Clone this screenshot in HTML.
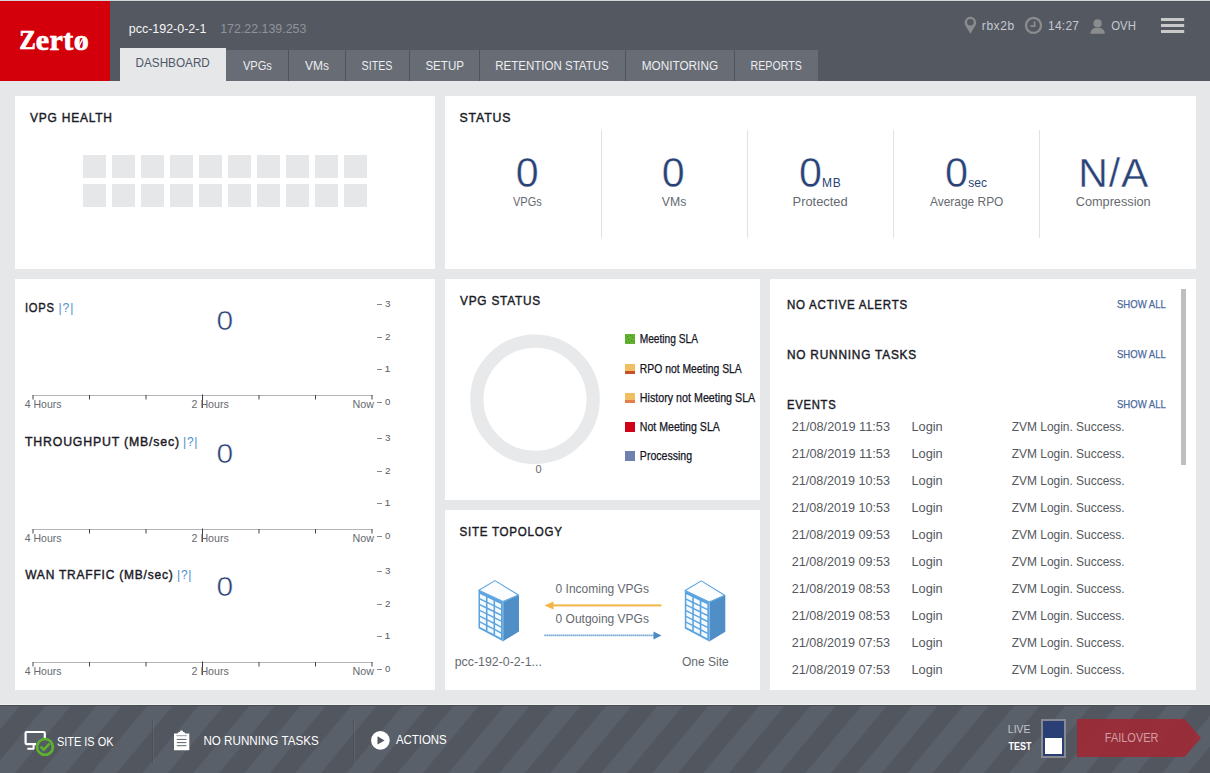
<!DOCTYPE html>
<html><head><meta charset="utf-8"><title>Zerto</title>
<style>
html,body{margin:0;padding:0;}
body{width:1210px;height:773px;overflow:hidden;background:#e6e7e8;font-family:"Liberation Sans",sans-serif;}
#root{position:relative;width:1210px;height:773px;overflow:hidden;background:#e6e7e8;}
.t{position:absolute;white-space:pre;line-height:1;transform-origin:0 50%;font-family:"Liberation Sans",sans-serif;}
.b{position:absolute;}
.panel{position:absolute;background:#fff;}
svg{position:absolute;overflow:visible;}

</style></head>
<body>
<div id="root">
<div class="b" style="left:0px;top:0px;width:1210px;height:81px;background:#545861;"></div>
<div class="b" style="left:0px;top:0px;width:1210px;height:1px;background:#d3d5d6;"></div>
<div class="b" style="left:0px;top:1px;width:1210px;height:1px;background:#4d5159;"></div>
<div class="b" style="left:0px;top:1px;width:110px;height:80px;background:#d3000c;"></div>
<div class="b" style="left:120px;top:48px;width:106px;height:33px;background:#e6e7e8;"></div>
<div class="b" style="left:226px;top:50px;width:592px;height:31px;background:#676c75;"></div>
<div class="b" style="left:288px;top:50px;width:1px;height:31px;background:#50545c;"></div>
<div class="b" style="left:345px;top:50px;width:1px;height:31px;background:#50545c;"></div>
<div class="b" style="left:409px;top:50px;width:1px;height:31px;background:#50545c;"></div>
<div class="b" style="left:479px;top:50px;width:1px;height:31px;background:#50545c;"></div>
<div class="b" style="left:625px;top:50px;width:1px;height:31px;background:#50545c;"></div>
<div class="b" style="left:734px;top:50px;width:1px;height:31px;background:#50545c;"></div>
<svg style="left:0;top:0" width="1210" height="81" viewBox="0 0 1210 81">
<g fill="#8b8c8e">
<path fill-rule="evenodd" d="M970.4 16.8c-3.2 0-5.7 2.5-5.7 5.6 0 1.5.5 2.6 1.2 3.8l4.5 7.6 4.5-7.6c.7-1.2 1.2-2.3 1.2-3.8 0-3.100-2.500-5.600-5.700-5.600zM970.400 18.900a3.300 3.300 0 1 1 0 6.600 3.300 3.300 0 0 1 0-6.600z"/>
<circle cx="1097.6" cy="23.4" r="4.1"/>
<path d="M1090.400 33.800c0-3.600 2.600-5.900 5-5.900h4.400c2.400 0 5 2.300 5 5.900z"/>
</g>
<circle cx="1033.500" cy="25.400" r="7.500" fill="none" stroke="#8b8c8e" stroke-width="2.300"/>
<path d="M1034.600 21.500v4.600h-4.200" fill="none" stroke="#8b8c8e" stroke-width="1.800"/>
<path d="M78.700 46.800L82.500 39.300" stroke="#fff" stroke-width="1.300" fill="none"/>
<g fill="#c9c9c9"><rect x="1161" y="18" width="23.200" height="3"/><rect x="1161" y="24" width="23.200" height="3"/><rect x="1161" y="30" width="23.200" height="3"/></g>
</svg>
<div class="panel" style="left:15px;top:96px;width:420px;height:173px"></div>
<div class="panel" style="left:445px;top:96px;width:751px;height:173px"></div>
<div class="panel" style="left:15px;top:279px;width:420px;height:411px"></div>
<div class="panel" style="left:445px;top:279px;width:315px;height:221px"></div>
<div class="panel" style="left:445px;top:510px;width:315px;height:180px"></div>
<div class="panel" style="left:770px;top:279px;width:426px;height:411px"></div>
<div class="b" style="left:83px;top:155px;width:23px;height:23px;background:#e6e7e8;"></div>
<div class="b" style="left:112px;top:155px;width:23px;height:23px;background:#e6e7e8;"></div>
<div class="b" style="left:141px;top:155px;width:23px;height:23px;background:#e6e7e8;"></div>
<div class="b" style="left:170px;top:155px;width:23px;height:23px;background:#e6e7e8;"></div>
<div class="b" style="left:199px;top:155px;width:23px;height:23px;background:#e6e7e8;"></div>
<div class="b" style="left:228px;top:155px;width:23px;height:23px;background:#e6e7e8;"></div>
<div class="b" style="left:257px;top:155px;width:23px;height:23px;background:#e6e7e8;"></div>
<div class="b" style="left:286px;top:155px;width:23px;height:23px;background:#e6e7e8;"></div>
<div class="b" style="left:315px;top:155px;width:23px;height:23px;background:#e6e7e8;"></div>
<div class="b" style="left:344px;top:155px;width:23px;height:23px;background:#e6e7e8;"></div>
<div class="b" style="left:83px;top:184px;width:23px;height:23px;background:#e6e7e8;"></div>
<div class="b" style="left:112px;top:184px;width:23px;height:23px;background:#e6e7e8;"></div>
<div class="b" style="left:141px;top:184px;width:23px;height:23px;background:#e6e7e8;"></div>
<div class="b" style="left:170px;top:184px;width:23px;height:23px;background:#e6e7e8;"></div>
<div class="b" style="left:199px;top:184px;width:23px;height:23px;background:#e6e7e8;"></div>
<div class="b" style="left:228px;top:184px;width:23px;height:23px;background:#e6e7e8;"></div>
<div class="b" style="left:257px;top:184px;width:23px;height:23px;background:#e6e7e8;"></div>
<div class="b" style="left:286px;top:184px;width:23px;height:23px;background:#e6e7e8;"></div>
<div class="b" style="left:315px;top:184px;width:23px;height:23px;background:#e6e7e8;"></div>
<div class="b" style="left:344px;top:184px;width:23px;height:23px;background:#e6e7e8;"></div>
<div class="b" style="left:600.5px;top:130px;width:1px;height:108px;background:#e2e2e3;"></div>
<div class="b" style="left:747px;top:130px;width:1px;height:108px;background:#e2e2e3;"></div>
<div class="b" style="left:893px;top:130px;width:1px;height:108px;background:#e2e2e3;"></div>
<div class="b" style="left:1039px;top:130px;width:1px;height:108px;background:#e2e2e3;"></div>
<svg style="left:0;top:0" width="440" height="773" viewBox="0 0 440 773"><rect x="33" y="395" width="339.500" height="1" fill="#b4b4b6"/><rect x="32.5" y="395" width="1" height="4.500" fill="#3d4456"/><rect x="89.0" y="395" width="1" height="4.500" fill="#3d4456"/><rect x="145.5" y="395" width="1" height="4.500" fill="#3d4456"/><rect x="202.0" y="394.5" width="1" height="13.500" fill="#343c50"/><rect x="258.5" y="395" width="1" height="4.500" fill="#3d4456"/><rect x="315.0" y="395" width="1" height="4.500" fill="#3d4456"/><rect x="371.5" y="395" width="1" height="4.500" fill="#3d4456"/><rect x="377" y="304" width="5" height="1" fill="#858689"/><rect x="377" y="337" width="5" height="1" fill="#858689"/><rect x="377" y="369" width="5" height="1" fill="#858689"/><rect x="377" y="402" width="5" height="1" fill="#858689"/></svg>
<svg style="left:0;top:0" width="440" height="773" viewBox="0 0 440 773"><rect x="33" y="529" width="339.500" height="1" fill="#b4b4b6"/><rect x="32.5" y="529" width="1" height="4.500" fill="#3d4456"/><rect x="89.0" y="529" width="1" height="4.500" fill="#3d4456"/><rect x="145.5" y="529" width="1" height="4.500" fill="#3d4456"/><rect x="202.0" y="528.5" width="1" height="13.500" fill="#343c50"/><rect x="258.5" y="529" width="1" height="4.500" fill="#3d4456"/><rect x="315.0" y="529" width="1" height="4.500" fill="#3d4456"/><rect x="371.5" y="529" width="1" height="4.500" fill="#3d4456"/><rect x="377" y="438" width="5" height="1" fill="#858689"/><rect x="377" y="471" width="5" height="1" fill="#858689"/><rect x="377" y="503" width="5" height="1" fill="#858689"/><rect x="377" y="536" width="5" height="1" fill="#858689"/></svg>
<svg style="left:0;top:0" width="440" height="773" viewBox="0 0 440 773"><rect x="33" y="662" width="339.500" height="1" fill="#b4b4b6"/><rect x="32.5" y="662" width="1" height="4.500" fill="#3d4456"/><rect x="89.0" y="662" width="1" height="4.500" fill="#3d4456"/><rect x="145.5" y="662" width="1" height="4.500" fill="#3d4456"/><rect x="202.0" y="661.5" width="1" height="13.500" fill="#343c50"/><rect x="258.5" y="662" width="1" height="4.500" fill="#3d4456"/><rect x="315.0" y="662" width="1" height="4.500" fill="#3d4456"/><rect x="371.5" y="662" width="1" height="4.500" fill="#3d4456"/><rect x="377" y="571" width="5" height="1" fill="#858689"/><rect x="377" y="604" width="5" height="1" fill="#858689"/><rect x="377" y="636" width="5" height="1" fill="#858689"/><rect x="377" y="669" width="5" height="1" fill="#858689"/></svg>
<svg style="left:0;top:0" width="1210" height="773" viewBox="0 0 1210 773">
<circle cx="535" cy="399.300" r="58.150" fill="none" stroke="#e8e9ea" stroke-width="13.300"/>
<rect x="625" y="334" width="10" height="10" fill="#62b22f"/>
<g fill="#3f8f1c"><rect x="627" y="336" width="1" height="1"/><rect x="630" y="335" width="1" height="1"/><rect x="632" y="337" width="1" height="1"/><rect x="628" y="339" width="1" height="1"/><rect x="631" y="340" width="1" height="1"/><rect x="626" y="341" width="1" height="1"/><rect x="633" y="341" width="1" height="1"/><rect x="629" y="342" width="1" height="1"/></g>
<rect x="625" y="364" width="10" height="10" fill="#f2be62"/><rect x="625" y="371" width="10" height="3" fill="#c4502a"/>
<rect x="625" y="393" width="10" height="10" fill="#f2be62"/><rect x="625" y="400" width="10" height="3" fill="#e27e48"/>
<rect x="625" y="422" width="10" height="10" fill="#d0021a"/>
<rect x="625" y="451" width="10" height="10" fill="#6d80ae"/>
</svg>
<svg style="left:0;top:0" width="1210" height="773" viewBox="0 0 1210 773"><g transform="translate(478,580)"><polygon points="0.5,10.200 25,22 25,61.3 0.5,48.200" fill="#5ba3df"/><polygon points="25,22 41,15 41,51.5 25,61.3" fill="#4f8ec6"/><polygon points="17,0.6 40.4,15 25,21.6 0.8,10.200" fill="#fbfdfe" stroke="#5ba3df" stroke-width="1.100" stroke-linejoin="round"/><polygon points="1.99,13.93 7.94,16.80 7.94,21.03 1.99,18.13" fill="#f4f9fd"/><polygon points="1.99,19.68 7.94,22.60 7.94,26.83 1.99,23.88" fill="#f4f9fd"/><polygon points="1.99,25.43 7.94,28.40 7.94,32.64 1.99,29.63" fill="#f4f9fd"/><polygon points="1.99,31.18 7.94,34.20 7.94,38.44 1.99,35.38" fill="#f4f9fd"/><polygon points="1.99,36.93 7.94,40.00 7.94,44.24 1.99,41.13" fill="#f4f9fd"/><polygon points="1.99,42.68 7.94,45.81 7.94,50.04 1.99,46.88" fill="#f4f9fd"/><polygon points="9.52,17.56 15.48,20.42 15.48,24.70 9.52,21.80" fill="#f4f9fd"/><polygon points="9.52,23.37 15.48,26.29 15.48,30.57 9.52,27.62" fill="#f4f9fd"/><polygon points="9.52,29.19 15.48,32.16 15.48,36.44 9.52,33.43" fill="#f4f9fd"/><polygon points="9.52,35.00 15.48,38.02 15.48,42.31 9.52,39.25" fill="#f4f9fd"/><polygon points="9.52,40.82 15.48,43.89 15.48,48.17 9.52,45.07" fill="#f4f9fd"/><polygon points="9.52,46.64 15.48,49.76 15.48,54.04 9.52,50.88" fill="#f4f9fd"/><polygon points="17.06,21.18 23.01,24.05 23.01,28.38 17.06,25.47" fill="#f4f9fd"/><polygon points="17.06,27.06 23.01,29.98 23.01,34.31 17.06,31.36" fill="#f4f9fd"/><polygon points="17.06,32.94 23.01,35.91 23.01,40.24 17.06,37.24" fill="#f4f9fd"/><polygon points="17.06,38.83 23.01,41.84 23.01,46.17 17.06,43.12" fill="#f4f9fd"/><polygon points="17.06,44.71 23.01,47.78 23.01,52.11 17.06,49.00" fill="#f4f9fd"/><polygon points="17.06,50.59 23.01,53.71 23.01,58.04 17.06,54.88" fill="#f4f9fd"/><path d="M25 22V61.300" stroke="#8cc0ea" stroke-width="1" fill="none"/></g><g transform="translate(684.3,580.3)"><polygon points="0.5,10.200 25,22 25,61.3 0.5,48.200" fill="#5ba3df"/><polygon points="25,22 41,15 41,51.5 25,61.3" fill="#4f8ec6"/><polygon points="17,0.6 40.4,15 25,21.6 0.8,10.200" fill="#fbfdfe" stroke="#5ba3df" stroke-width="1.100" stroke-linejoin="round"/><polygon points="1.99,13.93 7.94,16.80 7.94,21.03 1.99,18.13" fill="#f4f9fd"/><polygon points="1.99,19.68 7.94,22.60 7.94,26.83 1.99,23.88" fill="#f4f9fd"/><polygon points="1.99,25.43 7.94,28.40 7.94,32.64 1.99,29.63" fill="#f4f9fd"/><polygon points="1.99,31.18 7.94,34.20 7.94,38.44 1.99,35.38" fill="#f4f9fd"/><polygon points="1.99,36.93 7.94,40.00 7.94,44.24 1.99,41.13" fill="#f4f9fd"/><polygon points="1.99,42.68 7.94,45.81 7.94,50.04 1.99,46.88" fill="#f4f9fd"/><polygon points="9.52,17.56 15.48,20.42 15.48,24.70 9.52,21.80" fill="#f4f9fd"/><polygon points="9.52,23.37 15.48,26.29 15.48,30.57 9.52,27.62" fill="#f4f9fd"/><polygon points="9.52,29.19 15.48,32.16 15.48,36.44 9.52,33.43" fill="#f4f9fd"/><polygon points="9.52,35.00 15.48,38.02 15.48,42.31 9.52,39.25" fill="#f4f9fd"/><polygon points="9.52,40.82 15.48,43.89 15.48,48.17 9.52,45.07" fill="#f4f9fd"/><polygon points="9.52,46.64 15.48,49.76 15.48,54.04 9.52,50.88" fill="#f4f9fd"/><polygon points="17.06,21.18 23.01,24.05 23.01,28.38 17.06,25.47" fill="#f4f9fd"/><polygon points="17.06,27.06 23.01,29.98 23.01,34.31 17.06,31.36" fill="#f4f9fd"/><polygon points="17.06,32.94 23.01,35.91 23.01,40.24 17.06,37.24" fill="#f4f9fd"/><polygon points="17.06,38.83 23.01,41.84 23.01,46.17 17.06,43.12" fill="#f4f9fd"/><polygon points="17.06,44.71 23.01,47.78 23.01,52.11 17.06,49.00" fill="#f4f9fd"/><polygon points="17.06,50.59 23.01,53.71 23.01,58.04 17.06,54.88" fill="#f4f9fd"/><path d="M25 22V61.300" stroke="#8cc0ea" stroke-width="1" fill="none"/></g><rect x="551" y="604.400" width="110.500" height="2" fill="#f2b548"/>
<polygon points="544.500,605.400 553.500,601.400 553.500,609.400" fill="#f2b548"/>
<path d="M544.500 635.400H654" stroke="#4a8bc6" stroke-width="1.600" stroke-dasharray="1.200 0.800" fill="none"/>
<polygon points="661.500,635.400 653.500,631.400 653.500,639.400" fill="#4a8bc6"/>
<rect x="1181" y="289" width="5" height="176" fill="#bec0c0"/>
</svg>
<div class="b" style="left:0px;top:704px;width:1210px;height:1px;background:#f1f1f2;"></div>
<svg style="left:0;top:705px" width="1210" height="68" viewBox="0 0 1210 68"><rect x="0" y="0" width="1210" height="68" fill="#52565f"/><polygon points="-158.0,0 -132.5,0 -189.1,68 -214.6,68" fill="#5a6069"/><polygon points="-107.0,0 -81.5,0 -138.1,68 -163.6,68" fill="#5a6069"/><polygon points="-56.0,0 -30.5,0 -87.1,68 -112.6,68" fill="#5a6069"/><polygon points="-5.0,0 20.5,0 -36.1,68 -61.6,68" fill="#5a6069"/><polygon points="46.0,0 71.5,0 14.9,68 -10.6,68" fill="#5a6069"/><polygon points="97.0,0 122.5,0 65.9,68 40.4,68" fill="#5a6069"/><polygon points="148.0,0 173.5,0 116.9,68 91.4,68" fill="#5a6069"/><polygon points="199.0,0 224.5,0 167.9,68 142.4,68" fill="#5a6069"/><polygon points="250.0,0 275.5,0 218.9,68 193.4,68" fill="#5a6069"/><polygon points="301.0,0 326.5,0 269.9,68 244.4,68" fill="#5a6069"/><polygon points="352.0,0 377.5,0 320.9,68 295.4,68" fill="#5a6069"/><polygon points="403.0,0 428.5,0 371.9,68 346.4,68" fill="#5a6069"/><polygon points="454.0,0 479.5,0 422.9,68 397.4,68" fill="#5a6069"/><polygon points="505.0,0 530.5,0 473.9,68 448.4,68" fill="#5a6069"/><polygon points="556.0,0 581.5,0 524.9,68 499.4,68" fill="#5a6069"/><polygon points="607.0,0 632.5,0 575.9,68 550.4,68" fill="#5a6069"/><polygon points="658.0,0 683.5,0 626.9,68 601.4,68" fill="#5a6069"/><polygon points="709.0,0 734.5,0 677.9,68 652.4,68" fill="#5a6069"/><polygon points="760.0,0 785.5,0 728.9,68 703.4,68" fill="#5a6069"/><polygon points="811.0,0 836.5,0 779.9,68 754.4,68" fill="#5a6069"/><polygon points="862.0,0 887.5,0 830.9,68 805.4,68" fill="#5a6069"/><polygon points="913.0,0 938.5,0 881.9,68 856.4,68" fill="#5a6069"/><polygon points="964.0,0 989.5,0 932.9,68 907.4,68" fill="#5a6069"/><polygon points="1015.0,0 1040.5,0 983.9,68 958.4,68" fill="#5a6069"/><polygon points="1066.0,0 1091.5,0 1034.9,68 1009.4,68" fill="#5a6069"/><polygon points="1117.0,0 1142.5,0 1085.9,68 1060.4,68" fill="#5a6069"/><polygon points="1168.0,0 1193.5,0 1136.9,68 1111.4,68" fill="#5a6069"/><polygon points="1219.0,0 1244.5,0 1187.9,68 1162.4,68" fill="#5a6069"/><rect x="0" y="0" width="1210" height="1" fill="#474b53"/><rect x="152" y="14" width="1" height="44" fill="#474b53" opacity="0.55"/><rect x="153" y="14" width="1" height="44" fill="#6d727a" opacity="0.45"/><rect x="353" y="14" width="1" height="44" fill="#474b53" opacity="0.55"/><rect x="354" y="14" width="1" height="44" fill="#6d727a" opacity="0.45"/><g fill="none" stroke="#fff" stroke-width="2.200" stroke-linejoin="round">
<path d="M44.800 34v-6a1 1 0 0 0-1-1h-17.200a1 1 0 0 0-1 1v10.100a1 1 0 0 0 1 1h9.500"/>
<path d="M33.600 39.100v4.700h-6.300" stroke-width="2"/>
</g>
<circle cx="45" cy="41.900" r="7.900" fill="#555a63" stroke="#5cb52c" stroke-width="2.600"/>
<path d="M40.600 41.700l3.100 3 5.800-6" fill="none" stroke="#5cb52c" stroke-width="2.400"/><path d="M174 28.600h3.600l1.300-1.700h1c.2-.8.800-1.300 1.600-1.300s1.400.5 1.600 1.300h1l1.300 1.700h3.900v16.600h-15.300z" fill="#fff"/>
<path d="M176.300 30.700h10.600" stroke="#7d828a" stroke-width="0.800" fill="none"/>
<g fill="#5c616a"><rect x="176.800" y="33.900" width="9.600" height="1"/><rect x="176.800" y="37.100" width="9.600" height="1"/><rect x="176.800" y="40.200" width="9.600" height="1"/></g><circle cx="380.400" cy="35.400" r="9.300" fill="#fff"/><polygon points="377.500,31.300 384.500,35.400 377.500,39.500" fill="#52565f"/><rect x="1041" y="14" width="25" height="39" fill="#868a90"/><rect x="1043" y="16" width="21" height="35" fill="#2b3f77"/><rect x="1045" y="33" width="17" height="16" fill="#fff"/><polygon points="1077,14 1184.500,14 1201,33 1184.500,52 1077,52" fill="#a32631" fill-opacity="0.850"/></svg>
<span class="t" style="left:19px;top:26.20px;font-size:28px;color:#fff;font-weight:bold;font-family:'Liberation Serif', serif;transform:translateX(0.19px) scaleX(0.8881);-webkit-text-stroke:0.7px #fff;">Z</span>
<span class="t" style="left:35px;top:24.56px;font-size:30px;color:#fff;font-weight:bold;font-family:'Liberation Serif', serif;letter-spacing:0.443px;transform:translateX(0.73px) scaleX(1.0000);-webkit-text-stroke:0.7px #fff;">erto</span>
<span class="t" style="left:128px;top:23.02px;font-size:12.5px;color:#f4f4f4;transform:translateX(0.79px) scaleX(0.9967);">pcc-192-0-2-1</span>
<span class="t" style="left:220px;top:23.02px;font-size:12.5px;color:#90939b;transform:translateX(0.20px) scaleX(0.9917);">172.22.139.253</span>
<span class="t" style="left:135px;top:56.84px;font-size:12px;color:#4e5768;transform:translateX(0.49px) scaleX(0.9782);">DASHBOARD</span>
<span class="t" style="left:242px;top:59.84px;font-size:12px;color:#eceef0;transform:translateX(0.94px) scaleX(0.9235);">VPGs</span>
<span class="t" style="left:304px;top:59.84px;font-size:12px;color:#eceef0;transform:translateX(0.94px) scaleX(0.9969);">VMs</span>
<span class="t" style="left:361px;top:59.84px;font-size:12px;color:#eceef0;transform:translateX(0.62px) scaleX(0.8902);">SITES</span>
<span class="t" style="left:425px;top:59.84px;font-size:12px;color:#eceef0;transform:translateX(0.38px) scaleX(0.9647);">SETUP</span>
<span class="t" style="left:495px;top:59.84px;font-size:12px;color:#eceef0;transform:translateX(0.19px) scaleX(0.9605);">RETENTION STATUS</span>
<span class="t" style="left:641px;top:59.84px;font-size:12px;color:#eceef0;transform:translateX(0.64px) scaleX(0.9828);">MONITORING</span>
<span class="t" style="left:750px;top:59.84px;font-size:12px;color:#eceef0;transform:translateX(0.57px) scaleX(0.8857);">REPORTS</span>
<span class="t" style="left:981px;top:19.64px;font-size:12px;color:#c6c9d2;letter-spacing:0.572px;transform:translateX(0.81px) scaleX(1.0000);">rbx2b</span>
<span class="t" style="left:1048px;top:19.64px;font-size:12px;color:#c6c9d2;letter-spacing:0.241px;transform:translateX(0.01px) scaleX(1.0000);">14:27</span>
<span class="t" style="left:1111px;top:19.64px;font-size:12px;color:#c6c9d2;transform:translateX(0.20px) scaleX(0.9483);">OVH</span>
<span class="t" style="left:29px;top:110.57px;font-size:13.5px;color:#1b1b27;letter-spacing:0.900px;transform:translateX(1.00px) scaleX(0.8854);-webkit-text-stroke:0.45px #1b1b27;">VPG HEALTH</span>
<span class="t" style="left:459px;top:110.57px;font-size:13.5px;color:#1b1b27;letter-spacing:0.900px;transform:translateX(0.57px) scaleX(0.9117);-webkit-text-stroke:0.45px #1b1b27;">STATUS</span>
<span class="t" style="left:24px;top:300.57px;font-size:13.5px;color:#1b1b27;letter-spacing:0.900px;transform:translateX(0.93px) scaleX(0.8295);-webkit-text-stroke:0.45px #1b1b27;">IOPS</span>
<span class="t" style="left:25px;top:434.57px;font-size:13.5px;color:#1b1b27;letter-spacing:0.900px;transform:translateX(0.00px) scaleX(0.9114);-webkit-text-stroke:0.45px #1b1b27;">THROUGHPUT (MB/sec)</span>
<span class="t" style="left:25px;top:567.97px;font-size:13.5px;color:#1b1b27;letter-spacing:0.900px;transform:translateX(0.22px) scaleX(0.8866);-webkit-text-stroke:0.45px #1b1b27;">WAN TRAFFIC (MB/sec)</span>
<span class="t" style="left:459px;top:293.57px;font-size:13.5px;color:#1b1b27;letter-spacing:0.900px;transform:translateX(1.00px) scaleX(0.8757);-webkit-text-stroke:0.45px #1b1b27;">VPG STATUS</span>
<span class="t" style="left:459px;top:524.57px;font-size:13.5px;color:#1b1b27;letter-spacing:0.900px;transform:translateX(0.43px) scaleX(0.8564);-webkit-text-stroke:0.45px #1b1b27;">SITE TOPOLOGY</span>
<span class="t" style="left:786px;top:297.57px;font-size:13.5px;color:#1b1b27;letter-spacing:0.900px;transform:translateX(0.89px) scaleX(0.8546);-webkit-text-stroke:0.45px #1b1b27;">NO ACTIVE ALERTS</span>
<span class="t" style="left:786px;top:347.57px;font-size:13.5px;color:#1b1b27;letter-spacing:0.900px;transform:translateX(0.92px) scaleX(0.8778);-webkit-text-stroke:0.45px #1b1b27;">NO RUNNING TASKS</span>
<span class="t" style="left:787px;top:397.57px;font-size:13.5px;color:#1b1b27;letter-spacing:0.900px;transform:translateX(0.00px) scaleX(0.8324);-webkit-text-stroke:0.45px #1b1b27;">EVENTS</span>
<span class="t" style="left:58px;top:301.84px;font-size:12px;color:#4b8fca;letter-spacing:1.022px;transform:translateX(0.46px) scaleX(1.0000);">|?|</span>
<span class="t" style="left:183px;top:435.84px;font-size:12px;color:#4b8fca;letter-spacing:0.751px;transform:translateX(0.03px) scaleX(1.0000);">|?|</span>
<span class="t" style="left:177px;top:569.24px;font-size:12px;color:#4b8fca;letter-spacing:0.751px;transform:translateX(0.03px) scaleX(1.0000);">|?|</span>
<span class="t" style="left:515px;top:151.20px;font-size:43px;color:#2a4377;transform:translateX(0.74px) scaleX(0.9581);-webkit-text-stroke:0.4px #fff;">0</span>
<span class="t" style="left:661px;top:151.20px;font-size:43px;color:#2a4377;transform:translateX(0.74px) scaleX(0.9581);-webkit-text-stroke:0.4px #fff;">0</span>
<span class="t" style="left:798px;top:151.20px;font-size:43px;color:#2a4377;transform:translateX(0.95px) scaleX(0.9592);-webkit-text-stroke:0.4px #fff;">0</span>
<span class="t" style="left:944px;top:151.20px;font-size:43px;color:#2a4377;transform:translateX(0.99px) scaleX(0.9643);-webkit-text-stroke:0.4px #fff;">0</span>
<span class="t" style="left:1078px;top:153.19px;font-size:41px;color:#2a4377;letter-spacing:0.855px;transform:translateX(0.28px) scaleX(1.0000);-webkit-text-stroke:0.4px #fff;">N/A</span>
<span class="t" style="left:822px;top:176.84px;font-size:12px;color:#2a4377;letter-spacing:0.865px;transform:translateX(0.00px) scaleX(1.0000);">MB</span>
<span class="t" style="left:968px;top:176.84px;font-size:12px;color:#2a4377;letter-spacing:0.054px;transform:translateX(0.16px) scaleX(1.0000);">sec</span>
<span class="t" style="left:513px;top:195.00px;font-size:13px;color:#666a70;transform:translateX(0.00px) scaleX(0.8467);">VPGs</span>
<span class="t" style="left:661px;top:195.00px;font-size:13px;color:#666a70;transform:translateX(0.84px) scaleX(0.9399);">VMs</span>
<span class="t" style="left:792px;top:195.00px;font-size:13px;color:#666a70;transform:translateX(0.56px) scaleX(0.9909);">Protected</span>
<span class="t" style="left:929px;top:195.00px;font-size:13px;color:#666a70;transform:translateX(0.95px) scaleX(0.9184);">Average RPO</span>
<span class="t" style="left:1075px;top:195.00px;font-size:13px;color:#666a70;transform:translateX(0.74px) scaleX(0.9774);">Compression</span>
<span class="t" style="left:216px;top:305.87px;font-size:28.5px;color:#2a4377;transform:translateX(0.45px) scaleX(1.0518);-webkit-text-stroke:0.5px #fff;">0</span>
<span class="t" style="left:24px;top:398.69px;font-size:11px;color:#66696e;transform:translateX(0.75px) scaleX(0.9548);">4 Hours</span>
<span class="t" style="left:191px;top:398.69px;font-size:11px;color:#66696e;transform:translateX(0.52px) scaleX(0.9685);">2 Hours</span>
<span class="t" style="left:352px;top:398.69px;font-size:11px;color:#66696e;transform:translateX(0.59px) scaleX(0.9776);">Now</span>
<span class="t" style="left:384px;top:299.88px;font-size:9px;color:#5c5d60;transform:translateX(0.94px) scaleX(1.0887);">3</span>
<span class="t" style="left:384px;top:332.88px;font-size:9px;color:#5c5d60;transform:translateX(0.94px) scaleX(1.0978);">2</span>
<span class="t" style="left:384px;top:364.88px;font-size:9px;color:#5c5d60;transform:translateX(0.56px) scaleX(1.1896);">1</span>
<span class="t" style="left:385px;top:397.88px;font-size:9px;color:#5c5d60;transform:translateX(0.12px) scaleX(1.0640);">0</span>
<span class="t" style="left:216px;top:438.67px;font-size:28.5px;color:#2a4377;transform:translateX(0.45px) scaleX(1.0518);-webkit-text-stroke:0.5px #fff;">0</span>
<span class="t" style="left:24px;top:532.69px;font-size:11px;color:#66696e;transform:translateX(0.75px) scaleX(0.9548);">4 Hours</span>
<span class="t" style="left:191px;top:532.69px;font-size:11px;color:#66696e;transform:translateX(0.52px) scaleX(0.9685);">2 Hours</span>
<span class="t" style="left:352px;top:532.69px;font-size:11px;color:#66696e;transform:translateX(0.59px) scaleX(0.9776);">Now</span>
<span class="t" style="left:384px;top:433.88px;font-size:9px;color:#5c5d60;transform:translateX(0.94px) scaleX(1.0887);">3</span>
<span class="t" style="left:384px;top:466.88px;font-size:9px;color:#5c5d60;transform:translateX(0.94px) scaleX(1.0978);">2</span>
<span class="t" style="left:384px;top:498.88px;font-size:9px;color:#5c5d60;transform:translateX(0.56px) scaleX(1.1896);">1</span>
<span class="t" style="left:385px;top:531.88px;font-size:9px;color:#5c5d60;transform:translateX(0.12px) scaleX(1.0640);">0</span>
<span class="t" style="left:216px;top:572.47px;font-size:28.5px;color:#2a4377;transform:translateX(0.45px) scaleX(1.0518);-webkit-text-stroke:0.5px #fff;">0</span>
<span class="t" style="left:24px;top:665.69px;font-size:11px;color:#66696e;transform:translateX(0.75px) scaleX(0.9548);">4 Hours</span>
<span class="t" style="left:191px;top:665.69px;font-size:11px;color:#66696e;transform:translateX(0.52px) scaleX(0.9685);">2 Hours</span>
<span class="t" style="left:352px;top:665.69px;font-size:11px;color:#66696e;transform:translateX(0.59px) scaleX(0.9776);">Now</span>
<span class="t" style="left:384px;top:566.88px;font-size:9px;color:#5c5d60;transform:translateX(0.94px) scaleX(1.0887);">3</span>
<span class="t" style="left:384px;top:599.88px;font-size:9px;color:#5c5d60;transform:translateX(0.94px) scaleX(1.0978);">2</span>
<span class="t" style="left:384px;top:631.88px;font-size:9px;color:#5c5d60;transform:translateX(0.56px) scaleX(1.1896);">1</span>
<span class="t" style="left:385px;top:664.88px;font-size:9px;color:#5c5d60;transform:translateX(0.12px) scaleX(1.0640);">0</span>
<span class="t" style="left:639px;top:332.97px;font-size:12.2px;color:#15151f;transform:translateX(0.67px) scaleX(0.8372);-webkit-text-stroke:0.25px #15151f;">Meeting SLA</span>
<span class="t" style="left:639px;top:362.97px;font-size:12.2px;color:#15151f;transform:translateX(0.87px) scaleX(0.8499);-webkit-text-stroke:0.25px #15151f;">RPO not Meeting SLA</span>
<span class="t" style="left:639px;top:391.97px;font-size:12.2px;color:#15151f;transform:translateX(0.83px) scaleX(0.8783);-webkit-text-stroke:0.25px #15151f;">History not Meeting SLA</span>
<span class="t" style="left:639px;top:420.87px;font-size:12.2px;color:#15151f;transform:translateX(0.85px) scaleX(0.8680);-webkit-text-stroke:0.25px #15151f;">Not Meeting SLA</span>
<span class="t" style="left:639px;top:449.87px;font-size:12.2px;color:#15151f;transform:translateX(0.86px) scaleX(0.8658);-webkit-text-stroke:0.25px #15151f;">Processing</span>
<span class="t" style="left:535px;top:464.11px;font-size:10.5px;color:#66696e;transform:translateX(0.47px) scaleX(1.0472);">0</span>
<span class="t" style="left:555px;top:582.00px;font-size:13px;color:#666a70;transform:translateX(0.54px) scaleX(0.9228);">0 Incoming VPGs</span>
<span class="t" style="left:555px;top:612.00px;font-size:13px;color:#666a70;transform:translateX(0.54px) scaleX(0.9228);">0 Outgoing VPGs</span>
<span class="t" style="left:454px;top:655.00px;font-size:13px;color:#666a70;transform:translateX(0.75px) scaleX(0.9495);">pcc-192-0-2-1...</span>
<span class="t" style="left:681px;top:654.50px;font-size:13px;color:#666a70;transform:translateX(0.97px) scaleX(0.9262);">One Site</span>
<span class="t" style="left:791px;top:420.00px;font-size:13px;color:#55585e;transform:translateX(0.71px) scaleX(0.9804);">21/08/2019 11:53</span>
<span class="t" style="left:911px;top:420.00px;font-size:13px;color:#55585e;transform:translateX(0.42px) scaleX(0.9838);">Login</span>
<span class="t" style="left:1011px;top:420.00px;font-size:13px;color:#55585e;transform:translateX(0.72px) scaleX(0.9189);">ZVM Login. Success.</span>
<span class="t" style="left:791px;top:447.00px;font-size:13px;color:#55585e;transform:translateX(0.71px) scaleX(0.9804);">21/08/2019 11:53</span>
<span class="t" style="left:911px;top:447.00px;font-size:13px;color:#55585e;transform:translateX(0.42px) scaleX(0.9838);">Login</span>
<span class="t" style="left:1011px;top:447.00px;font-size:13px;color:#55585e;transform:translateX(0.72px) scaleX(0.9189);">ZVM Login. Success.</span>
<span class="t" style="left:791px;top:474.00px;font-size:13px;color:#55585e;transform:translateX(0.81px) scaleX(0.9707);">21/08/2019 10:53</span>
<span class="t" style="left:911px;top:474.00px;font-size:13px;color:#55585e;transform:translateX(0.42px) scaleX(0.9838);">Login</span>
<span class="t" style="left:1011px;top:474.00px;font-size:13px;color:#55585e;transform:translateX(0.72px) scaleX(0.9189);">ZVM Login. Success.</span>
<span class="t" style="left:791px;top:501.00px;font-size:13px;color:#55585e;transform:translateX(0.81px) scaleX(0.9707);">21/08/2019 10:53</span>
<span class="t" style="left:911px;top:501.00px;font-size:13px;color:#55585e;transform:translateX(0.42px) scaleX(0.9838);">Login</span>
<span class="t" style="left:1011px;top:501.00px;font-size:13px;color:#55585e;transform:translateX(0.72px) scaleX(0.9189);">ZVM Login. Success.</span>
<span class="t" style="left:791px;top:528.00px;font-size:13px;color:#55585e;transform:translateX(0.81px) scaleX(0.9707);">21/08/2019 09:53</span>
<span class="t" style="left:911px;top:528.00px;font-size:13px;color:#55585e;transform:translateX(0.42px) scaleX(0.9838);">Login</span>
<span class="t" style="left:1011px;top:528.00px;font-size:13px;color:#55585e;transform:translateX(0.72px) scaleX(0.9189);">ZVM Login. Success.</span>
<span class="t" style="left:791px;top:555.00px;font-size:13px;color:#55585e;transform:translateX(0.81px) scaleX(0.9707);">21/08/2019 09:53</span>
<span class="t" style="left:911px;top:555.00px;font-size:13px;color:#55585e;transform:translateX(0.42px) scaleX(0.9838);">Login</span>
<span class="t" style="left:1011px;top:555.00px;font-size:13px;color:#55585e;transform:translateX(0.72px) scaleX(0.9189);">ZVM Login. Success.</span>
<span class="t" style="left:791px;top:582.00px;font-size:13px;color:#55585e;transform:translateX(0.81px) scaleX(0.9707);">21/08/2019 08:53</span>
<span class="t" style="left:911px;top:582.00px;font-size:13px;color:#55585e;transform:translateX(0.42px) scaleX(0.9838);">Login</span>
<span class="t" style="left:1011px;top:582.00px;font-size:13px;color:#55585e;transform:translateX(0.72px) scaleX(0.9189);">ZVM Login. Success.</span>
<span class="t" style="left:791px;top:609.00px;font-size:13px;color:#55585e;transform:translateX(0.81px) scaleX(0.9707);">21/08/2019 08:53</span>
<span class="t" style="left:911px;top:609.00px;font-size:13px;color:#55585e;transform:translateX(0.42px) scaleX(0.9838);">Login</span>
<span class="t" style="left:1011px;top:609.00px;font-size:13px;color:#55585e;transform:translateX(0.72px) scaleX(0.9189);">ZVM Login. Success.</span>
<span class="t" style="left:791px;top:636.00px;font-size:13px;color:#55585e;transform:translateX(0.81px) scaleX(0.9707);">21/08/2019 07:53</span>
<span class="t" style="left:911px;top:636.00px;font-size:13px;color:#55585e;transform:translateX(0.42px) scaleX(0.9838);">Login</span>
<span class="t" style="left:1011px;top:636.00px;font-size:13px;color:#55585e;transform:translateX(0.72px) scaleX(0.9189);">ZVM Login. Success.</span>
<span class="t" style="left:791px;top:663.00px;font-size:13px;color:#55585e;transform:translateX(0.81px) scaleX(0.9707);">21/08/2019 07:53</span>
<span class="t" style="left:911px;top:663.00px;font-size:13px;color:#55585e;transform:translateX(0.42px) scaleX(0.9838);">Login</span>
<span class="t" style="left:1011px;top:663.00px;font-size:13px;color:#55585e;transform:translateX(0.72px) scaleX(0.9189);">ZVM Login. Success.</span>
<span class="t" style="left:1116px;top:299.27px;font-size:11.5px;color:#4a6a9c;transform:translateX(0.97px) scaleX(0.8295);-webkit-text-stroke:0.25px #4a6a9c;">SHOW ALL</span>
<span class="t" style="left:1116px;top:349.27px;font-size:11.5px;color:#4a6a9c;transform:translateX(0.97px) scaleX(0.8295);-webkit-text-stroke:0.25px #4a6a9c;">SHOW ALL</span>
<span class="t" style="left:1116px;top:399.27px;font-size:11.5px;color:#4a6a9c;transform:translateX(0.97px) scaleX(0.8295);-webkit-text-stroke:0.25px #4a6a9c;">SHOW ALL</span>
<span class="t" style="left:56px;top:735.00px;font-size:13px;color:#fff;transform:translateX(0.96px) scaleX(0.8408);">SITE IS OK</span>
<span class="t" style="left:203px;top:734.00px;font-size:13px;color:#fff;transform:translateX(0.43px) scaleX(0.8949);">NO RUNNING TASKS</span>
<span class="t" style="left:395px;top:733.00px;font-size:13px;color:#fff;transform:translateX(0.91px) scaleX(0.8798);">ACTIONS</span>
<span class="t" style="left:1007px;top:724.27px;font-size:11.5px;color:#c3c6cb;transform:translateX(0.86px) scaleX(0.9023);">LIVE</span>
<span class="t" style="left:1008px;top:741.07px;font-size:11.5px;color:#fff;font-weight:bold;transform:translateX(0.59px) scaleX(0.7784);">TEST</span>
<span class="t" style="left:1104px;top:732.42px;font-size:12.5px;color:#d29ea4;transform:translateX(0.79px) scaleX(0.8785);">FAILOVER</span>
</div>
</body></html>
